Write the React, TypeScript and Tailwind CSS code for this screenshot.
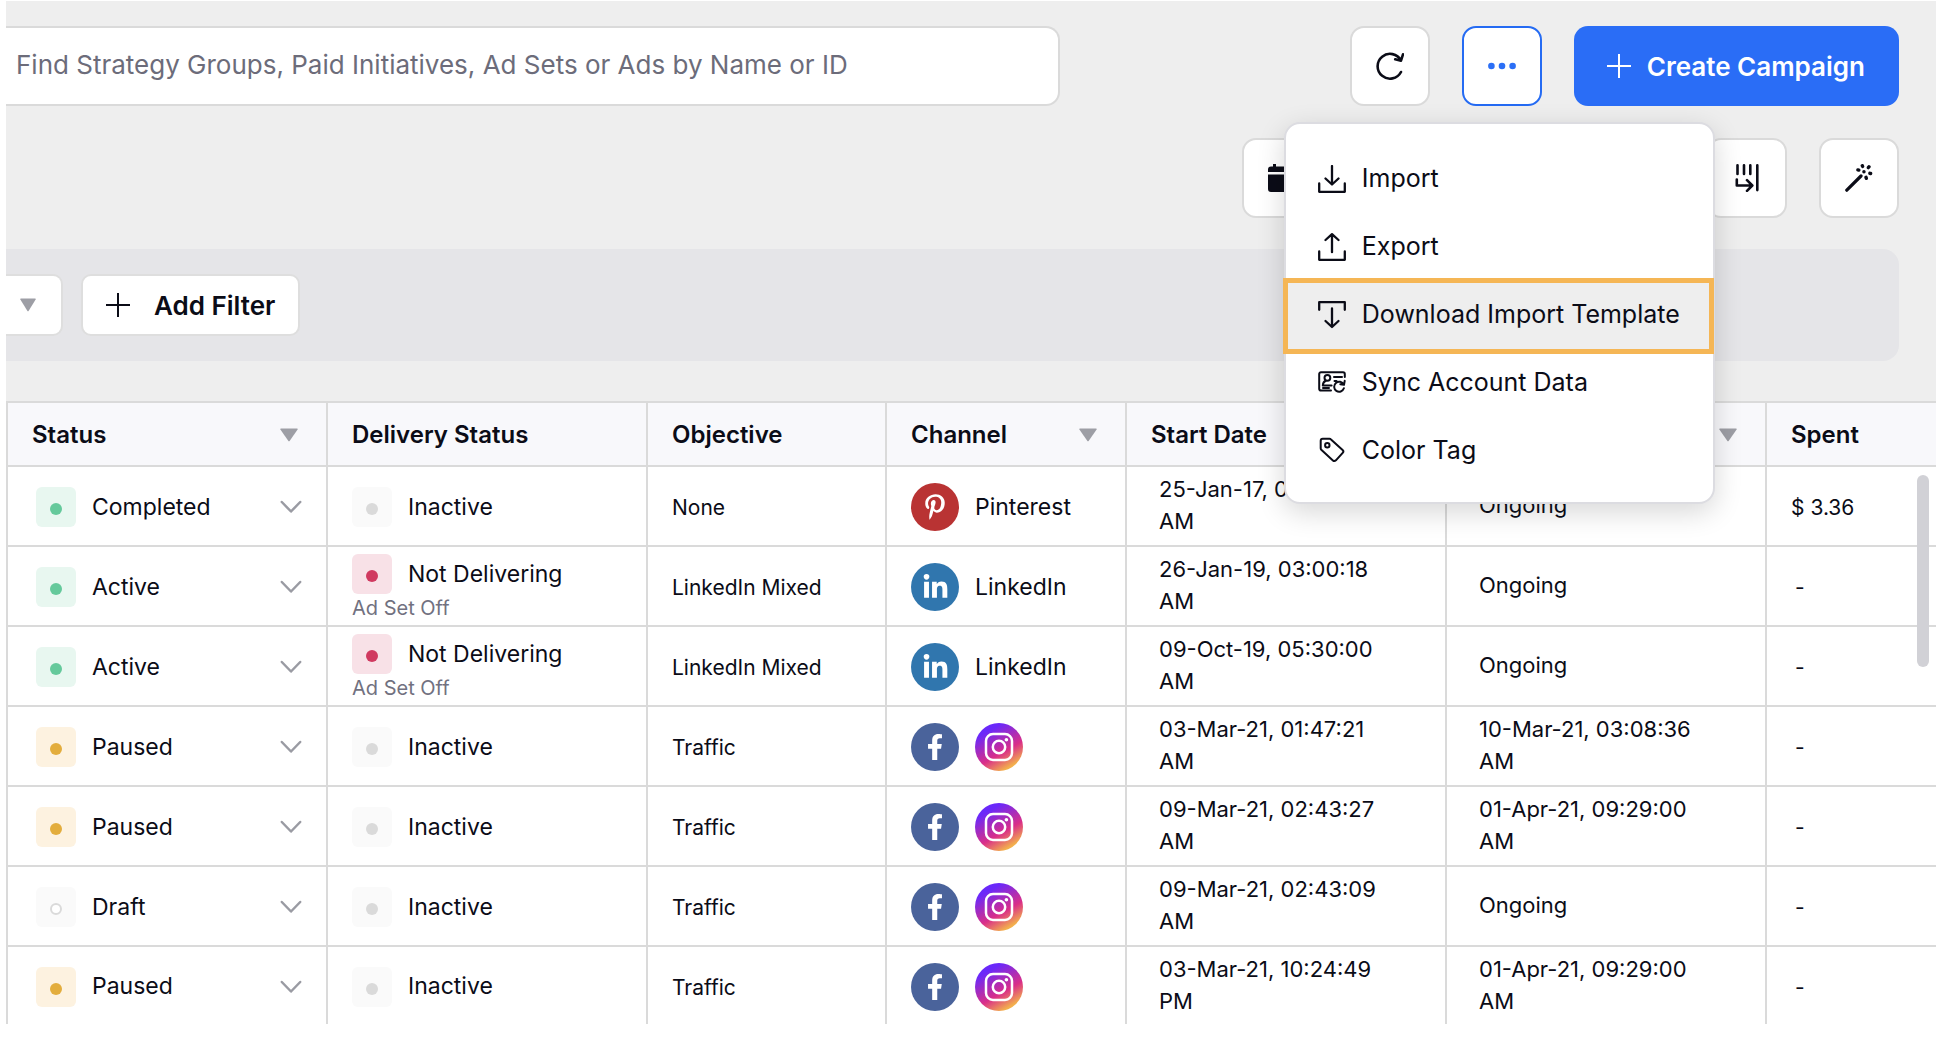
import { useState } from "react";
import type { ComponentProps, ReactNode } from "react";
import { clsx } from "clsx";
import { FaFacebookF, FaLinkedinIn, FaPinterestP } from "react-icons/fa";

type Tone = "green" | "amber" | "red" | "gray" | "draft";
type Channel = "pinterest" | "linkedin" | "facebook" | "instagram";

interface Row {
  status: string;
  tone: Tone;
  delivery: string;
  reason?: string;
  objective: string;
  channels: Channel[];
  channelLabel?: string;
  start: string;
  end: string;
  spent: string;
}

const ROWS: Row[] = [
  { status: "Completed", tone: "green", delivery: "Inactive", objective: "None", channels: ["pinterest"], channelLabel: "Pinterest", start: "25-Jan-17, 03:30:00 AM", end: "Ongoing", spent: "$ 3.36" },
  { status: "Active", tone: "green", delivery: "Not Delivering", reason: "Ad Set Off", objective: "LinkedIn Mixed", channels: ["linkedin"], channelLabel: "LinkedIn", start: "26-Jan-19, 03:00:18 AM", end: "Ongoing", spent: "-" },
  { status: "Active", tone: "green", delivery: "Not Delivering", reason: "Ad Set Off", objective: "LinkedIn Mixed", channels: ["linkedin"], channelLabel: "LinkedIn", start: "09-Oct-19, 05:30:00 AM", end: "Ongoing", spent: "-" },
  { status: "Paused", tone: "amber", delivery: "Inactive", objective: "Traffic", channels: ["facebook", "instagram"], start: "03-Mar-21, 01:47:21 AM", end: "10-Mar-21, 03:08:36 AM", spent: "-" },
  { status: "Paused", tone: "amber", delivery: "Inactive", objective: "Traffic", channels: ["facebook", "instagram"], start: "09-Mar-21, 02:43:27 AM", end: "01-Apr-21, 09:29:00 AM", spent: "-" },
  { status: "Draft", tone: "draft", delivery: "Inactive", objective: "Traffic", channels: ["facebook", "instagram"], start: "09-Mar-21, 02:43:09 AM", end: "Ongoing", spent: "-" },
  { status: "Paused", tone: "amber", delivery: "Inactive", objective: "Traffic", channels: ["facebook", "instagram"], start: "03-Mar-21, 10:24:49 PM", end: "01-Apr-21, 09:29:00 AM", spent: "-" },
];

const COLUMNS = [
  { label: "Status", width: "w-80", sortable: true },
  { label: "Delivery Status", width: "w-80" },
  { label: "Objective", width: "w-[239px]" },
  { label: "Channel", width: "w-60", sortable: true },
  { label: "Start Date", width: "w-80", sortable: true },
  { label: "End Date", width: "w-80", sortable: true },
  { label: "Spent", width: "" },
];

const BADGE_BG: Record<Tone, string> = {
  green: "bg-[#e8f7f0]",
  amber: "bg-[#fdf2e0]",
  red: "bg-[#f8e1e7]",
  gray: "bg-[#fafafa]",
  draft: "bg-[#fafafa]",
};

const BADGE_DOT: Record<Tone, string> = {
  green: "bg-[#65c99b]",
  amber: "bg-[#e3ad3d]",
  red: "bg-[#d03a60]",
  gray: "bg-[#dadada]",
  draft: "border-2 border-[#dadada] bg-white",
};

function Icon({ children, stroke = 2.3 }: { children: ReactNode; stroke?: number }) {
  return (
    <svg width="28" height="28" viewBox="0 0 28 28" fill="none" stroke="currentColor" strokeWidth={stroke} strokeLinecap="round" strokeLinejoin="round" className="shrink-0" aria-hidden="true">
      {children}
    </svg>
  );
}

function Plus() {
  return (
    <svg width="24" height="24" viewBox="0 0 24 24" stroke="currentColor" strokeWidth="2" aria-hidden="true">
      <path d="M12 0v24M0 12h24" />
    </svg>
  );
}

function Triangle({ size = 18 }: { size?: number }) {
  return (
    <svg width={size} height="14" viewBox="0 0 18 14" preserveAspectRatio="none" className="fill-[#9d9ea5]" aria-hidden="true">
      <path d="M1 .5h16a.7.7 0 0 1 .6 1L9.8 12.8a1 1 0 0 1-1.6 0L.4 1.5A.7.7 0 0 1 1 .5Z" />
    </svg>
  );
}

const MENU_ITEMS = [
  { label: "Import", icon: <Icon><path d="M14 1v18M7.5 13.5l6.5 6 6.5-6M1.2 18.5v8.3h25.6v-8.3" /></Icon> },
  { label: "Export", icon: <Icon><path d="M14 1.2v18M7.5 7 14 1.2 20.5 7M1.2 18.5v8.3h25.6v-8.3" /></Icon> },
  { label: "Download Import Template", highlighted: true, icon: <Icon><path d="M14 7.5v18M7.5 20l6.5 6 6.5-6M1.2 8.8V1.2h25.6v7.6" /></Icon> },
  {
    label: "Sync Account Data",
    icon: (
      <Icon stroke={2}>
        <path d="M13 21.5H3a1.8 1.8 0 0 1-1.8-1.8V5A1.8 1.8 0 0 1 3 3.2h22A1.8 1.8 0 0 1 26.8 5v3" />
        <circle cx="9.4" cy="8.8" r="2.9" />
        <path d="M7.8 11.8c-2 .8-2.9 2.4-3 4.7h8.8M16 8h8M5 19h6M16.5 12h2" />
        <path d="M25.7 15.6a5 5 0 1 0 .2 3.7M26.7 11.8l-.7 4-3.7-.6" />
      </Icon>
    ),
  },
  {
    label: "Color Tag",
    icon: (
      <Icon stroke={2}>
        <path d="M4.7 1.8h6.8c.6 0 1.1.2 1.5.6l11.6 10.5c.9.8.9 2 .1 2.9l-6.8 7.500c-.9.9-2.100.9-3 .1L3.300 12.800c-.4-.4-.6-.9-.6-1.500V3.800c0-1.100.9-2 2-2Z" />
        <circle cx="9.3" cy="8.2" r="2.2" />
      </Icon>
    ),
  },
];

function StatusBadge({ tone }: { tone: Tone }) {
  return (
    <span className={clsx("flex size-10 shrink-0 items-center justify-center rounded-md pt-1", BADGE_BG[tone])}>
      <span className={clsx("size-3 rounded-full", BADGE_DOT[tone])} />
    </span>
  );
}

function InstagramLogo() {
  return (
    <svg width="48" height="48" viewBox="0 0 48 48" fill="none" className="shrink-0" role="img" aria-label="Instagram">
      <defs>
        <linearGradient id="insta" x1="12" y1="4" x2="36" y2="46" gradientUnits="userSpaceOnUse">
          <stop offset="0.08" stopColor="#6a28fa" />
          <stop offset="0.62" stopColor="#da2f88" />
          <stop offset="0.95" stopColor="#f3b04c" />
        </linearGradient>
      </defs>
      <circle cx="24" cy="24" r="24" fill="url(#insta)" />
      <rect x="11" y="11" width="26" height="26" rx="7" stroke="#fff" strokeWidth="2.5" />
      <circle cx="24" cy="24" r="6.2" stroke="#fff" strokeWidth="2.5" />
      <circle cx="31.4" cy="16.8" r="1.8" fill="#fff" />
    </svg>
  );
}

function ChannelLogo({ channel }: { channel: Channel }) {
  if (channel === "instagram") return <InstagramLogo />;
  const base = "flex size-12 shrink-0 items-center justify-center rounded-full text-white";
  if (channel === "facebook") return <span className={clsx(base, "bg-[#4a639b]")}><FaFacebookF size={26} title="Facebook" /></span>;
  if (channel === "linkedin") return <span className={clsx(base, "bg-[#3076ae]")}><FaLinkedinIn size={27} title="LinkedIn" /></span>;
  return <span className={clsx(base, "bg-[#b93333]")}><FaPinterestP size={26} title="Pinterest" /></span>;
}

function IconButton({ label, className, ...rest }: ComponentProps<"button"> & { label: string }) {
  return (
    <button
      type="button"
      aria-label={label}
      className={clsx("flex h-20 items-center rounded-[14px] border-2 bg-white", className)}
      {...rest}
    />
  );
}

function ActionsMenu() {
  return (
    <ul role="menu" className="absolute top-full -right-[173px] z-10 mt-4 w-[431px] rounded-2xl border-2 border-[#dcdce1] bg-white pt-[21px] pb-[17px] shadow-[0_8px_28px_rgba(0,0,0,0.16)]">
      {MENU_ITEMS.map((item) => (
        <li key={item.label} role="none" className="relative">
          <button
            type="button"
            role="menuitem"
            className={clsx("flex h-17 w-full items-center gap-4 pl-8 text-left text-[25px] whitespace-nowrap", item.highlighted && "bg-[#eeeeee]")}
          >
            {item.icon}
            {item.label}
          </button>
          {item.highlighted && <span className="pointer-events-none absolute -top-[3px] -right-px -bottom-[5px] -left-[3px] border-5 border-[#f5b655]" />}
        </li>
      ))}
    </ul>
  );
}

export default function App() {
  const [menuOpen, setMenuOpen] = useState(true);

  return (
    <div className="overflow-hidden pt-px pl-1.5 font-['Inter',sans-serif] text-[#0b0c17]">
      <div className="relative bg-[#eeeeee]">
        <header className="flex items-center gap-8 pt-[25px] pr-[37px]">
          <input
            type="search"
            aria-label="Search campaigns"
            placeholder="Find Strategy Groups, Paid Initiatives, Ad Sets or Ads by Name or ID"
            className="h-20 min-w-0 flex-[0_1_1054px] rounded-r-[14px] border-y-2 border-r-2 border-[#dadada] bg-white px-2.5 pb-1 text-[26px] placeholder:text-[#6c6c7a]"
          />
          <div className="ml-auto flex gap-8">
            <IconButton label="Refresh" className="w-20 justify-center border-[#dadada]">
              <Icon stroke={2.6}>
                <path d="M25 8.5A12.4 12.4 0 1 0 25 20M27 2.3l-2 6.4-5.8-1.400" />
              </Icon>
            </IconButton>
            <div className="relative">
              <IconButton label="More actions" className="w-20 justify-center border-[#256bf3] text-[#2b6ff6]" aria-expanded={menuOpen} onClick={() => setMenuOpen(!menuOpen)}>
                <svg width="28" height="28" viewBox="0 0 28 28" fill="currentColor" aria-hidden="true">
                  <circle cx="3.4" cy="14" r="3.3" />
                  <circle cx="14" cy="14" r="3.3" />
                  <circle cx="24.6" cy="14" r="3.3" />
                </svg>
              </IconButton>
              {menuOpen && <ActionsMenu />}
            </div>
            <button type="button" className="flex h-20 items-center gap-4 rounded-[14px] bg-[#2a6df6] pr-[34px] pl-[33px] text-[26px] font-semibold whitespace-nowrap text-white">
              <Plus />
              Create Campaign
            </button>
          </div>
        </header>

        <div className="flex justify-end gap-8 pt-8 pr-[37px]">
          <IconButton label="Date range" className="w-[433px] border-[#dadada] pl-6">
            <svg width="28" height="28" viewBox="0 0 28 28" fill="currentColor" aria-hidden="true">
              <path d="M5 0h3v2.5h12V0h3v2.5h2a3 3 0 0 1 3 3V8H0V5.5a3 3 0 0 1 3-3h2ZM0 10.5h28V25a3 3 0 0 1-3 3H3a3 3 0 0 1-3-3Z" />
            </svg>
          </IconButton>
          <IconButton label="Manage columns" className="w-20 justify-center border-[#dadada]">
            <Icon stroke={2.6}>
              <path d="M4.5 1.3V10M11 1.3V10M17.3 1.3V10M24.3 1.3v24.8M3.8 15.5v6h15.4M14 16.2l5.3 5.3-5.3 5.3" />
            </Icon>
          </IconButton>
          <IconButton label="Smart suggestions" className="w-20 justify-center border-[#dadada]">
            <Icon stroke={3.2}>
              <path d="M1.8 26.2 16 12" />
              <path d="M18.9 7.7h.1M17.3 1.7l.3.7M24 2.8l-.6.8M12.9 5.9l.9.2M24.9 9.3l.7.2M21 13.3l.3 1" strokeWidth="3.4" />
            </Icon>
          </IconButton>
        </div>

        <div className="mt-[31px] mr-[37px] flex gap-[18px] rounded-r-2xl bg-[#e5e5e8] py-[25px]">
          <button type="button" aria-label="Open filter" className="flex h-[62px] w-[57px] items-center rounded-r-[10px] border-y-2 border-r-2 border-[#dedede] bg-white pl-[14px]">
            <Triangle size={16} />
          </button>
          <button type="button" className="flex h-[62px] items-center gap-6 rounded-[10px] border-2 border-[#dedede] bg-white px-[23px] text-[26px] font-semibold">
            <Plus />
            Add Filter
          </button>
        </div>

        <div className="relative mt-10">
          <table className="w-full table-fixed border-separate border-spacing-0 bg-white">
            <thead>
              <tr>
                {COLUMNS.map((col) => (
                  <th key={col.label} className={clsx("h-[66px] border-y-2 border-l-2 border-[#dadada] bg-[#f8f8fb] p-0 text-left text-2xl font-semibold", col.width)}>
                    <div className="flex items-center justify-between pt-0.5 pr-7 pl-6">
                      {col.label}
                      {col.sortable && (
                        <button type="button" aria-label={`Sort by ${col.label}`}>
                          <Triangle />
                        </button>
                      )}
                    </div>
                  </th>
                ))}
              </tr>
            </thead>
            <tbody className="[&_td]:h-20 [&_td]:border-b-2 [&_td]:border-l-2 [&_td]:border-[#dadada] [&_td]:p-0 [&_tr:last-child_td]:h-[77px] [&_tr:last-child_td]:border-b-0">
              {ROWS.map((row, index) => (
                <tr key={index}>
                  <td>
                    <div className="flex items-center gap-4 pt-0.5 pr-6 pl-7 text-[23px]">
                      <StatusBadge tone={row.tone} />
                      {row.status}
                      <button type="button" aria-label="Change status" className="ml-auto">
                        <svg width="22" height="14" viewBox="0 0 22 14" fill="none" stroke="#9a9ba3" strokeWidth="2.5" strokeLinecap="round" strokeLinejoin="round" aria-hidden="true">
                          <path d="m1.8 2 9.2 9.5L20.2 2" />
                        </svg>
                      </button>
                    </div>
                  </td>
                  <td>
                    <div className="pt-0.5 pl-6">
                      <div className="flex items-center gap-4 text-[23px]">
                        <StatusBadge tone={row.reason ? "red" : "gray"} />
                        {row.delivery}
                      </div>
                      {row.reason && <p className="mt-0.5 text-xl leading-6 text-[#717180]">{row.reason}</p>}
                    </div>
                  </td>
                  <td>
                    <div className="pt-1 pl-6 text-[21px]">{row.objective}</div>
                  </td>
                  <td>
                    <div className="flex items-center gap-4 pt-0.5 pl-6 text-[23px]">
                      {row.channels.map((channel) => (
                        <ChannelLogo key={channel} channel={channel} />
                      ))}
                      {row.channelLabel}
                    </div>
                  </td>
                  <td>
                    <div className="pr-11 pb-0.5 pl-8 text-[22px] leading-8">{row.start}</div>
                  </td>
                  <td>
                    <div className="pr-11 pb-0.5 pl-8 text-[22px] leading-8">{row.end}</div>
                  </td>
                  <td>
                    <div className={clsx("pt-1 text-[21px]", row.spent === "-" ? "pl-7" : "pl-6")}>{row.spent}</div>
                  </td>
                </tr>
              ))}
            </tbody>
          </table>
          <div className="absolute top-[74px] right-[7px] h-48 w-3 rounded-full bg-[#d1d1d6]" />
        </div>
      </div>
    </div>
  );
}
